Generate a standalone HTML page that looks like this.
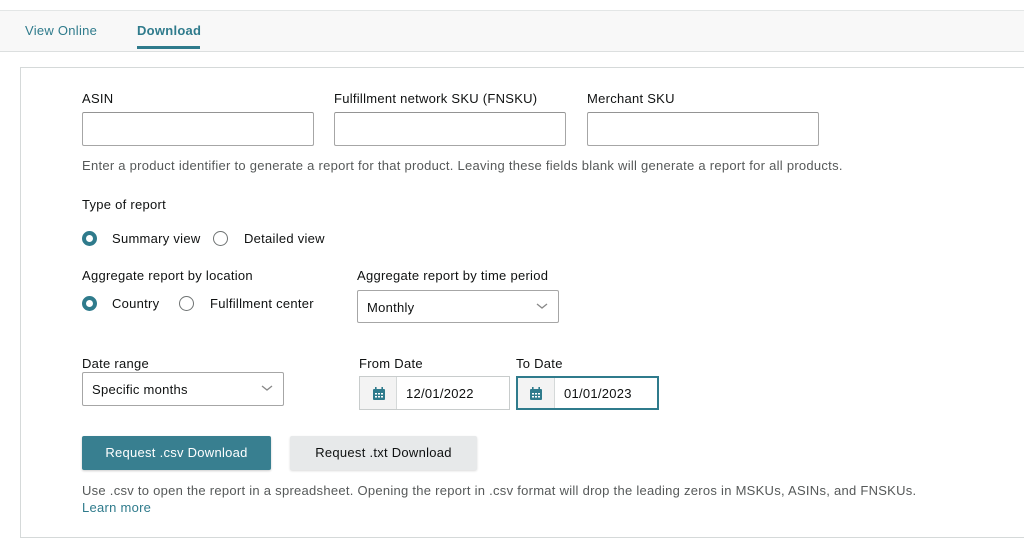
<!DOCTYPE html>
<html><head><meta charset="utf-8"><style>
*{box-sizing:border-box;margin:0;padding:0}
body{width:1024px;height:560px;background:#fff;font-family:"Liberation Sans",Arial,sans-serif;color:#0f1111;font-size:13px;letter-spacing:0.27px;position:relative;overflow:hidden}
.a{position:absolute;white-space:nowrap}
.tabbar{position:absolute;left:0;top:10px;width:1024px;height:42px;background:#f8f8f8;border-top:1px solid #e3e6e6;border-bottom:1px solid #dcdfdf}
.panel{position:absolute;left:20px;top:67px;width:1010px;height:471px;border:1px solid #d5d9d9;border-right:none}
.inp{position:absolute;height:34px;border:1px solid #a6a6a6;border-top-color:#949494;background:#fff;border-radius:2px}
.lbl{font-size:13px;color:#0f1111}
.help{color:#565959;font-size:13px}
.radio{position:absolute;width:15px;height:15px;border-radius:50%;border:1px solid #6f7373;background:#fff}
.radio.on{border:4px solid #2f7b8c}
.sel{position:absolute;border:1px solid #a6a6a6;border-radius:2px;background:#fff;height:34px}
.sel span{position:absolute;left:9px;top:9px}
.chev{position:absolute;right:10px;top:10px}
.date{position:absolute;height:34px;border:1px solid #c8cccc;background:#fff}
.date .ic{position:absolute;left:0;top:0;width:37px;height:100%;background:#f3f3f3;border-right:1px solid #d5d9d9}
.date .v{position:absolute;left:46px;top:9px}
.btn{position:absolute;height:34px;border-radius:2px;text-align:center;line-height:34px;font-size:13px}
</style></head><body>
<div class="tabbar"></div>
<div class="a" style="left:25px;top:23px;color:#2f7b8c;font-size:13px">View Online</div>
<div class="a" style="left:137px;top:23px;color:#2f7b8c;font-weight:bold;font-size:13px">Download</div>
<div class="a" style="left:137px;top:46px;width:63px;height:3px;background:#2f7b8c"></div>
<div class="panel"></div>

<div class="a lbl" style="left:82px;top:91px">ASIN</div>
<div class="a lbl" style="left:334px;top:91px">Fulfillment network SKU (FNSKU)</div>
<div class="a lbl" style="left:587px;top:91px">Merchant SKU</div>
<div class="inp" style="left:82px;top:112px;width:232px"></div>
<div class="inp" style="left:334px;top:112px;width:232px"></div>
<div class="inp" style="left:587px;top:112px;width:232px"></div>
<div class="a help" style="left:82px;top:158px">Enter a product identifier to generate a report for that product. Leaving these fields blank will generate a report for all products.</div>

<div class="a lbl" style="left:82px;top:197px">Type of report</div>
<div class="radio on" style="left:82px;top:231px"></div>
<div class="a" style="left:112px;top:231px">Summary view</div>
<div class="radio" style="left:213px;top:231px"></div>
<div class="a" style="left:244px;top:231px">Detailed view</div>

<div class="a lbl" style="left:82px;top:268px">Aggregate report by location</div>
<div class="radio on" style="left:82px;top:296px"></div>
<div class="a" style="left:112px;top:296px">Country</div>
<div class="radio" style="left:179px;top:296px"></div>
<div class="a" style="left:210px;top:296px">Fulfillment center</div>

<div class="a lbl" style="left:357px;top:268px">Aggregate report by time period</div>
<div class="sel" style="left:357px;top:290px;width:202px;height:33px"><span>Monthly</span>
<svg class="chev" width="12" height="10" viewBox="0 0 12 10"><path d="M1 3l5 4 5-4" fill="none" stroke="#888" stroke-width="1.3"/></svg></div>

<div class="a lbl" style="left:82px;top:356px">Date range</div>
<div class="sel" style="left:82px;top:372px;width:202px;height:34px"><span>Specific months</span>
<svg class="chev" width="12" height="10" viewBox="0 0 12 10"><path d="M1 3l5 4 5-4" fill="none" stroke="#888" stroke-width="1.3"/></svg></div>

<div class="a lbl" style="left:359px;top:356px">From Date</div>
<div class="date" style="left:359px;top:376px;width:151px">
<div class="ic"><svg style="position:absolute;left:12px;top:9px" width="14" height="15" viewBox="0 0 14 15"><rect x="1" y="3" width="12" height="11" rx="1" fill="#2f7b8c"/><rect x="3" y="1" width="1.6" height="3" fill="#2f7b8c"/><rect x="9.4" y="1" width="1.6" height="3" fill="#2f7b8c"/><g fill="#fff"><rect x="3" y="7" width="2" height="1.5"/><rect x="6" y="7" width="2" height="1.5"/><rect x="9" y="7" width="2" height="1.5"/><rect x="3" y="10" width="2" height="1.5"/><rect x="6" y="10" width="2" height="1.5"/><rect x="9" y="10" width="2" height="1.5"/></g></svg></div>
<div class="v">12/01/2022</div></div>

<div class="a lbl" style="left:516px;top:356px">To Date</div>
<div class="date" style="left:516px;top:376px;width:143px;border:2px solid #2f7b8c">
<div class="ic" style="top:0;height:100%"><svg style="position:absolute;left:11px;top:8px" width="14" height="15" viewBox="0 0 14 15"><rect x="1" y="3" width="12" height="11" rx="1" fill="#2f7b8c"/><rect x="3" y="1" width="1.6" height="3" fill="#2f7b8c"/><rect x="9.4" y="1" width="1.6" height="3" fill="#2f7b8c"/><g fill="#fff"><rect x="3" y="7" width="2" height="1.5"/><rect x="6" y="7" width="2" height="1.5"/><rect x="9" y="7" width="2" height="1.5"/><rect x="3" y="10" width="2" height="1.5"/><rect x="6" y="10" width="2" height="1.5"/><rect x="9" y="10" width="2" height="1.5"/></g></svg></div>
<div class="v" style="left:46px;top:8px">01/01/2023</div></div>

<div class="btn" style="left:82px;top:436px;width:189px;background:#387f90;color:#fff;box-shadow:0 1px 2px rgba(0,0,0,.2)">Request .csv Download</div>
<div class="btn" style="left:290px;top:436px;width:187px;background:#e7e9ea;color:#0f1111;box-shadow:0 1px 2px rgba(0,0,0,.15)">Request .txt Download</div>

<div class="a help" style="left:82px;top:483px">Use .csv to open the report in a spreadsheet. Opening the report in .csv format will drop the leading zeros in MSKUs, ASINs, and FNSKUs.</div>
<div class="a" style="left:82px;top:500px;color:#2f7b8c">Learn more</div>
</body></html>
